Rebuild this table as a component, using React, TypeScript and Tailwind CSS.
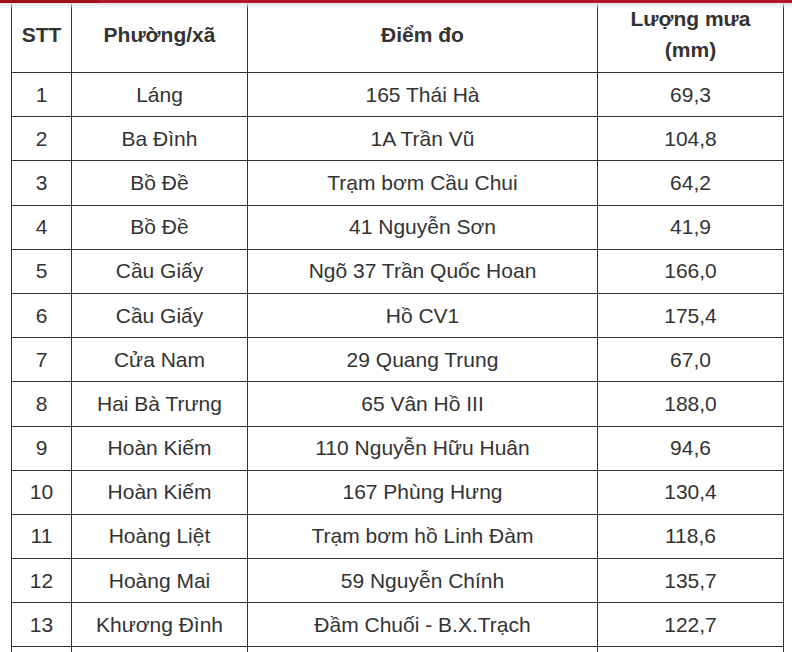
import React from "react";

const rows = [
  ["1", "Láng", "165 Thái Hà", "69,3"],
  ["2", "Ba Đình", "1A Trần Vũ", "104,8"],
  ["3", "Bồ Đề", "Trạm bơm Cầu Chui", "64,2"],
  ["4", "Bồ Đề", "41 Nguyễn Sơn", "41,9"],
  ["5", "Cầu Giấy", "Ngõ 37 Trần Quốc Hoan", "166,0"],
  ["6", "Cầu Giấy", "Hồ CV1", "175,4"],
  ["7", "Cửa Nam", "29 Quang Trung", "67,0"],
  ["8", "Hai Bà Trưng", "65 Vân Hồ III", "188,0"],
  ["9", "Hoàn Kiếm", "110 Nguyễn Hữu Huân", "94,6"],
  ["10", "Hoàn Kiếm", "167 Phùng Hưng", "130,4"],
  ["11", "Hoàng Liệt", "Trạm bơm hồ Linh Đàm", "118,6"],
  ["12", "Hoàng Mai", "59 Nguyễn Chính", "135,7"],
  ["13", "Khương Đình", "Đầm Chuối - B.X.Trạch", "122,7"],
  ["", "", "", ""],
];

export default function App() {
  return (
    <div className="relative h-[652px] overflow-hidden bg-white font-['Liberation_Sans',Arial,sans-serif] text-[#333]">
      {/* top bar */}
      <div className="absolute left-0 right-0 top-0 z-10">
        <div className="flex h-[3px]">
          <div className="w-[99px] bg-[#a10f1d]" />
          <div className="flex-1 bg-[#b3182a]" />
        </div>
        <div className="h-[6px] bg-gradient-to-b from-[#e4e4e4] to-transparent" />
      </div>

      <div className="pl-[11px] -mt-[2px]">
        <table className="w-[772px] border-collapse table-fixed">
          <colgroup>
            <col className="w-[60px]" />
            <col className="w-[176px]" />
            <col className="w-[350px]" />
            <col className="w-[186px]" />
          </colgroup>
          <thead>
            <tr className="h-[74px]">
              <th className="border border-[#333] pb-[3px] text-[21px] font-bold leading-[31px]">STT</th>
              <th className="border border-[#333] pb-[3px] text-[21px] font-bold leading-[31px]">Phường/xã</th>
              <th className="border border-[#333] pb-[3px] text-[21px] font-bold leading-[31px]">Điểm đo</th>
              <th className="border border-[#333] pb-[3px] text-[21px] font-bold leading-[31px]">
                Lượng mưa
                <br />
                (mm)
              </th>
            </tr>
          </thead>
          <tbody>
            {rows.map((r, k) => (
              <tr key={k} className="h-[44.2px]">
                {r.map((c, i) => (
                  <td key={i} className="border border-[#333] text-center text-[21px] leading-[28px]">
                    {c}
                  </td>
                ))}
              </tr>
            ))}
          </tbody>
        </table>
      </div>
    </div>
  );
}
